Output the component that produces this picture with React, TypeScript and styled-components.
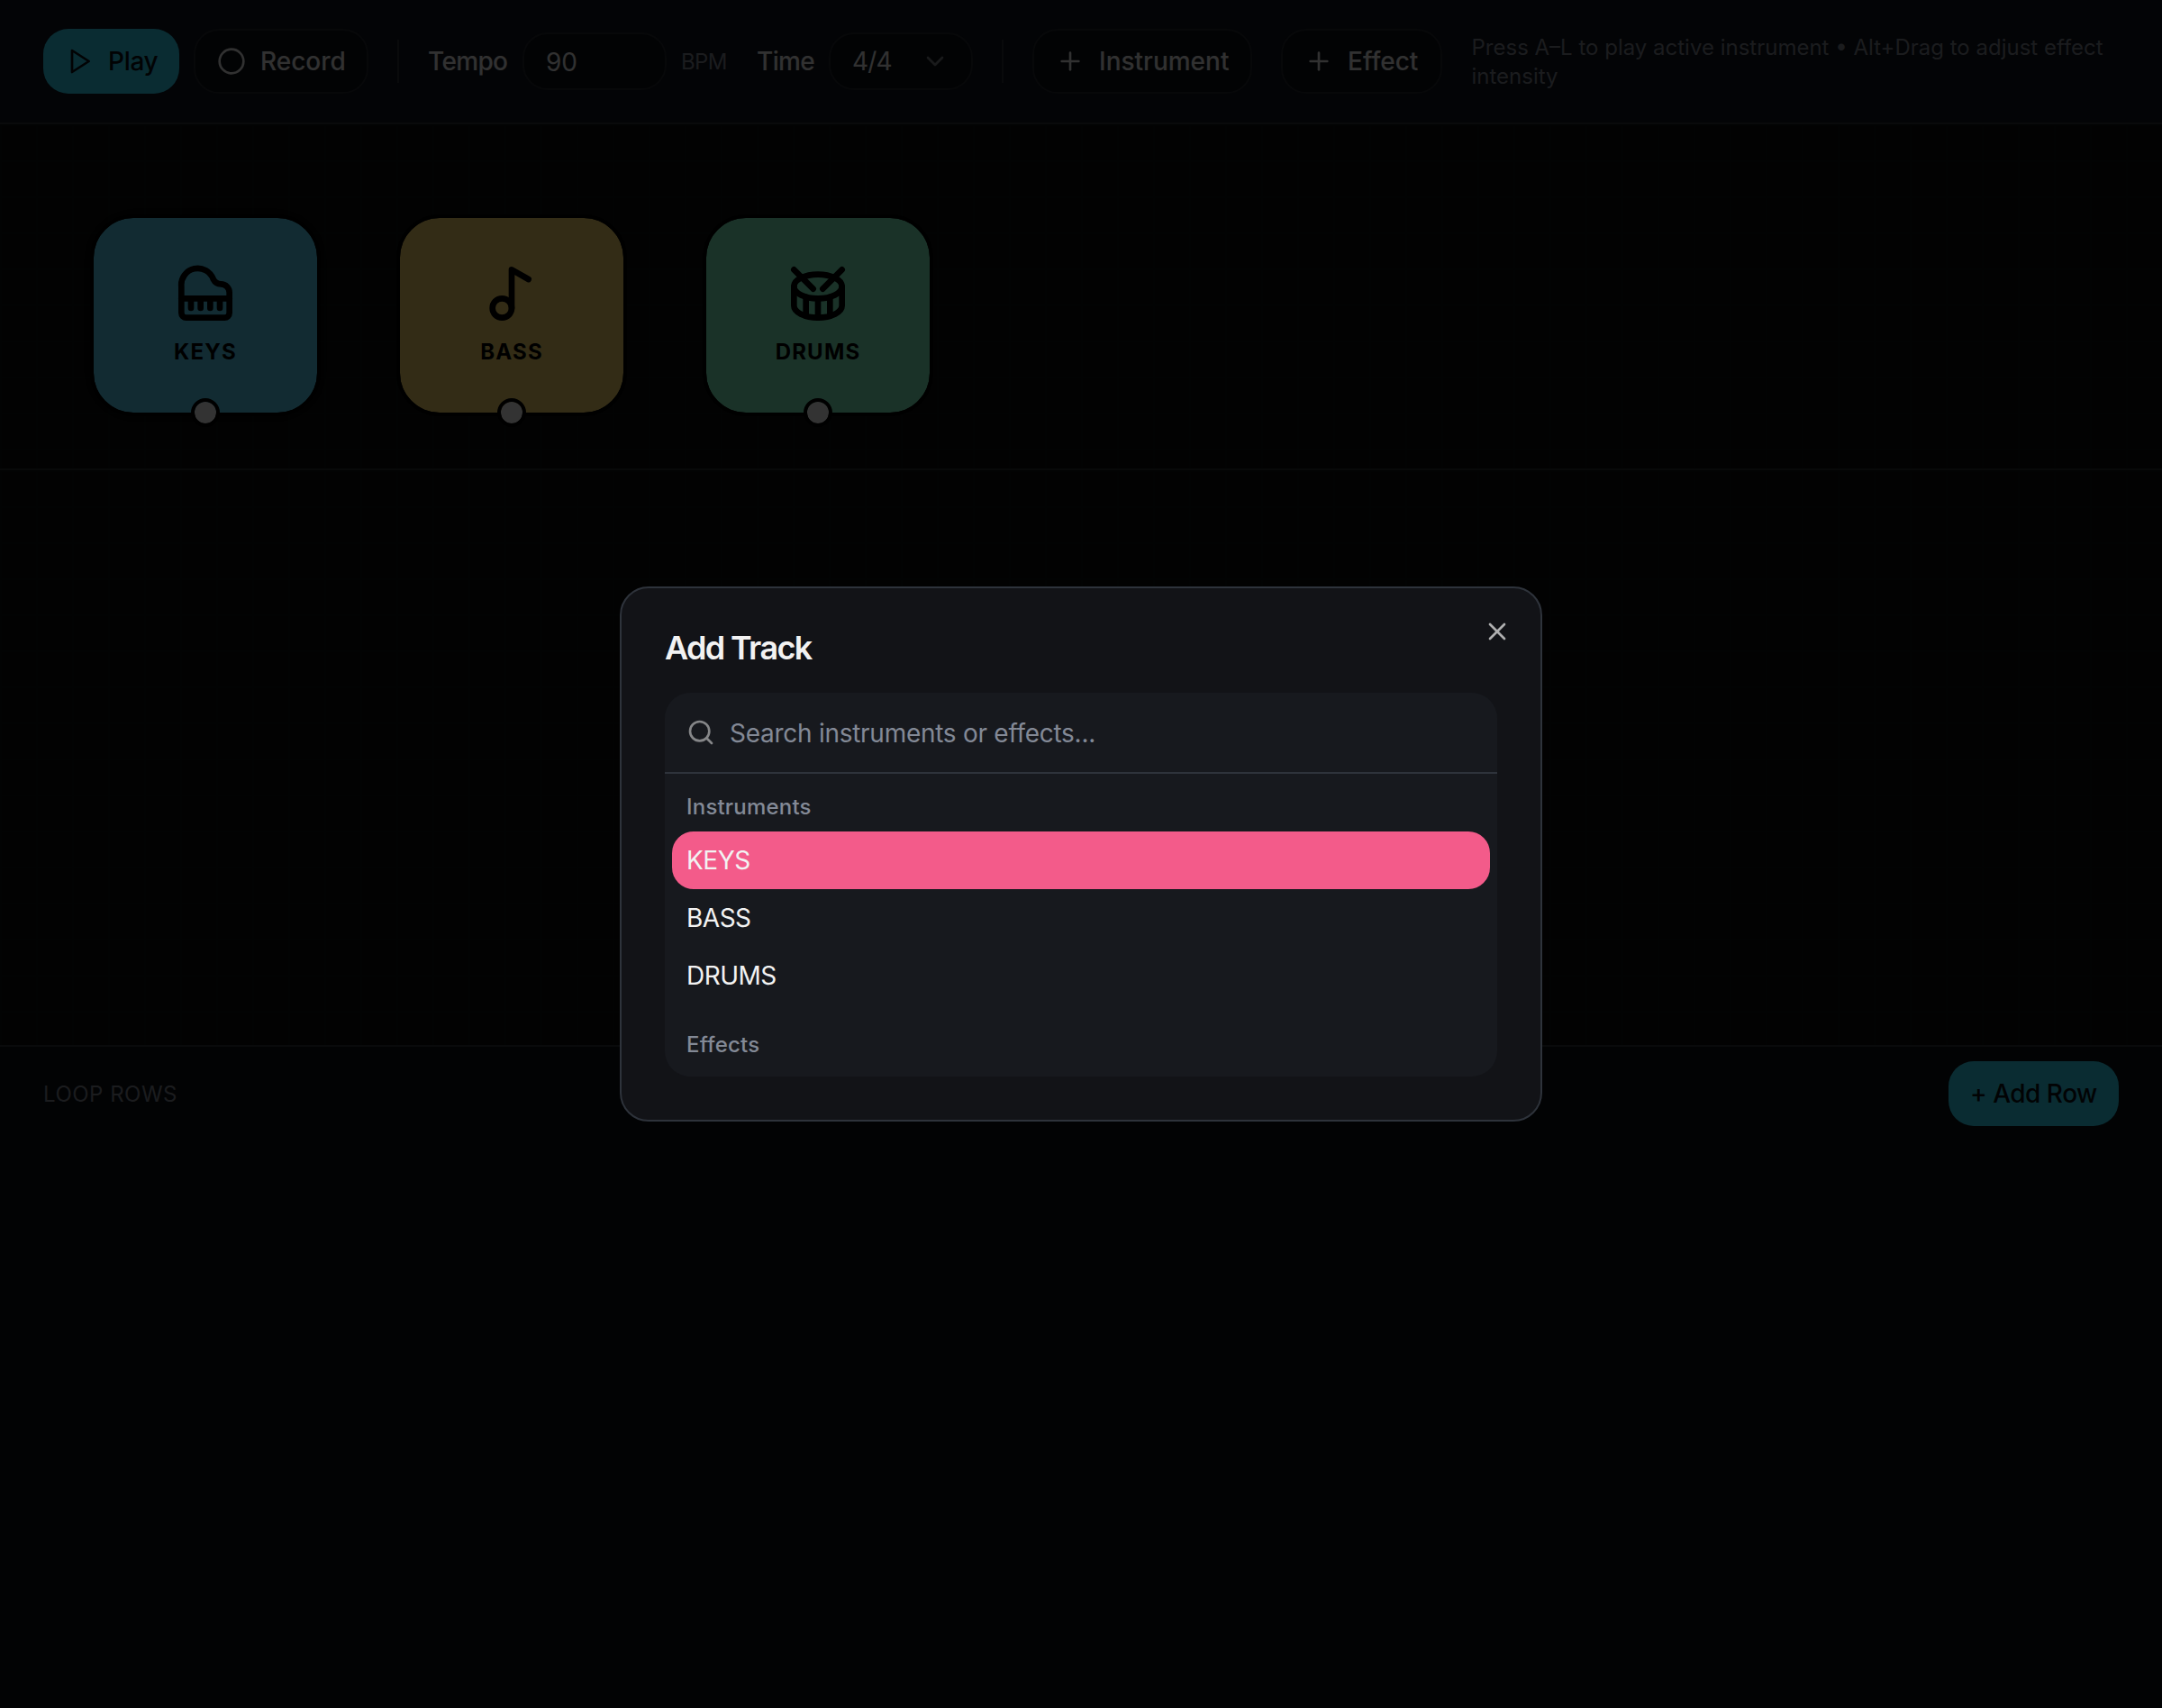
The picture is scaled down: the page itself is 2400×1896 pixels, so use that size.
import React from "react";
import styled, { createGlobalStyle } from "styled-components";
import { ChevronDown, Circle, Drum, Music2, Piano, Plus, Search, X } from "lucide-react";

const GlobalStyle = createGlobalStyle`
  *, *::before, *::after { box-sizing: border-box; }
  html, body, #root { height: 100%; }
  body {
    margin: 0;
    background: #0a0a0a;
    font-family: Inter, "Liberation Sans", sans-serif;
    font-size: 28px;
    line-height: 40px;
    color: #f2f2f2;
    overflow: hidden;
  }
  button, input { font: inherit; color: inherit; letter-spacing: inherit; }
`;

const LINE = "#2e333b";
const SOFT_LINE = "#24282e";
const ACCENT = "#32dcfa";

const Screen = styled.div`
  width: 2400px;
  height: 1896px;
  display: flex;
  flex-direction: column;
`;

const Toolbar = styled.header`
  display: flex;
  align-items: center;
  gap: 32px;
  height: 138px;
  padding: 0 48px;
  border-bottom: 2px solid ${LINE};
  background: #0f141e;
`;

const Group = styled.div`
  display: flex;
  align-items: center;
  gap: 16px;
  flex: none;
`;

const Button = styled.button<{ $width: number; $primary?: boolean; $tracking?: number }>`
  display: inline-flex;
  align-items: center;
  justify-content: flex-start;
  gap: 16px;
  flex: none;
  width: ${(p) => p.$width}px;
  height: 72px;
  padding: 0 24px;
  border: ${(p) => (p.$primary ? "0" : `2px solid ${SOFT_LINE}`)};
  border-radius: 28px;
  background: ${(p) => (p.$primary ? ACCENT : "#0a0f17")};
  color: ${(p) => (p.$primary ? "#0a0f17" : "#f2f2f2")};
  font-weight: 500;
  letter-spacing: ${(p) => p.$tracking ?? 0}px;
  white-space: nowrap;
  svg { flex: none; }
`;

const Divider = styled.span`
  width: 2px;
  height: 48px;
  flex: none;
  background: ${LINE};
`;

const Label = styled.span<{ $width: number }>`
  width: ${(p) => p.$width}px;
  font-weight: 500;
  letter-spacing: -0.65px;
  white-space: nowrap;
`;

const Field = styled.div`
  display: flex;
  align-items: center;
  justify-content: space-between;
  width: 160px;
  height: 64px;
  padding: 0 24px;
  border: 2px solid ${SOFT_LINE};
  border-radius: 28px;
  background: #0a0f17;
  letter-spacing: -0.8px;
`;

const NumberInput = styled.input`
  width: 100%;
  padding: 2px 0 0;
  border: 0;
  outline: 0;
  background: transparent;
  letter-spacing: 0;
`;

const Unit = styled.span`
  width: 52px;
  padding-top: 2px;
  font-size: 24px;
  line-height: 32px;
  letter-spacing: -0.7px;
  color: #858b98;
`;

const Hint = styled.p`
  margin: 0;
  padding: 2px 0 0 1px;
  flex: 1;
  font-size: 24px;
  line-height: 32px;
  color: #858b98;
`;

const Canvas = styled.section<{ $height: number; $ruled?: boolean }>`
  height: ${(p) => p.$height}px;
  padding: 100px;
  display: flex;
  align-items: flex-start;
  gap: 84px;
  background-color: #0c0c0c;
  background-image: linear-gradient(to right, #0c1211 2px, transparent 2px),
    linear-gradient(to bottom, #0c1211 2px, transparent 2px);
  background-size: 40px 40px;
  border-bottom: ${(p) => (p.$ruled ? "2px solid #2a2f31" : "0")};
`;

const Node = styled.div<{ $color: string; $active?: boolean }>`
  position: relative;
  display: flex;
  flex-direction: column;
  align-items: center;
  justify-content: center;
  gap: 16px;
  width: 256px;
  height: 224px;
  border: 4px solid #000;
  border-radius: 48px;
  background: ${(p) => p.$color};
  background-clip: padding-box;
  color: #000;
  box-shadow: ${(p) => (p.$active ? "0 0 24px rgba(0, 0, 0, 0.6)" : "none")};
`;

const NodeName = styled.span`
  height: 32px;
  padding-top: 1px;
  font-size: 24px;
  line-height: 32px;
  font-weight: 700;
  letter-spacing: 1.2px;
`;

const Port = styled.span`
  position: absolute;
  left: 50%;
  bottom: -16px;
  width: 32px;
  height: 32px;
  margin-left: -16px;
  border: 4px solid #000;
  border-radius: 50%;
  background: #fff;
  background-clip: padding-box;
`;

const LoopPanel = styled.section`
  flex: 1;
  padding: 16px 48px;
  border-top: 2px solid ${LINE};
  background: #0a0f17;
`;

const LoopHeader = styled.div`
  display: flex;
  align-items: center;
  justify-content: space-between;
`;

const LoopTitle = styled.span`
  padding-top: 2px;
  font-size: 24px;
  line-height: 32px;
  letter-spacing: 0.5px;
  color: #858b98;
`;

const Overlay = styled.div`
  position: fixed;
  inset: 0;
  display: flex;
  align-items: center;
  justify-content: center;
  background: rgba(0, 0, 0, 0.8);
`;

const Dialog = styled.div`
  position: relative;
  display: flex;
  flex-direction: column;
  gap: 32px;
  width: 1024px;
  padding: 48px;
  border: 2px solid ${LINE};
  border-radius: 32px;
  background: #121317;
`;

const DialogTitle = styled.h2`
  margin: 0;
  font-size: 36px;
  line-height: 36px;
  font-weight: 600;
  letter-spacing: -1.65px;
`;

const CloseButton = styled.button`
  position: absolute;
  top: 32px;
  right: 32px;
  display: flex;
  padding: 0;
  border: 0;
  background: transparent;
  opacity: 0.7;
`;

const Command = styled.div`
  border-radius: 28px;
  overflow: hidden;
  background: #17191e;
`;

const SearchRow = styled.div`
  display: flex;
  align-items: center;
  gap: 16px;
  height: 90px;
  padding: 0 24px;
  border-bottom: 2px solid ${LINE};
  svg { opacity: 0.5; flex: none; }
`;

const SearchInput = styled.input`
  flex: 1;
  padding: 2px 0 0;
  border: 0;
  outline: 0;
  background: transparent;
  letter-spacing: -0.27px;
  &::placeholder { color: #838996; opacity: 1; }
`;

const Section = styled.div`
  padding: 8px;
`;

const SectionTitle = styled.div`
  padding: 13px 16px 11px;
  font-size: 24px;
  line-height: 32px;
  font-weight: 500;
  letter-spacing: 0.2px;
  color: #838996;
`;

const Option = styled.div<{ $selected?: boolean }>`
  padding: 12px 16px;
  border-radius: 24px;
  letter-spacing: -0.5px;
  background: ${(p) => (p.$selected ? "#f35b8a" : "transparent")};
`;

const PlayIcon = () => (
  <svg width="32" height="32" viewBox="0 0 24 24" fill="none" stroke="currentColor" strokeWidth="2" strokeLinecap="round" strokeLinejoin="round">
    <polygon points="6 3 20 12 6 21 6 3" />
  </svg>
);

const nodes = [
  { name: "KEYS", color: "#5ad7fa", Icon: Piano, active: true },
  { name: "BASS", color: "#ffdc6e", Icon: Music2, active: false },
  { name: "DRUMS", color: "#84fac8", Icon: Drum, active: false },
];

export default function App() {
  return (
    <>
      <GlobalStyle />
      <Screen>
        <Toolbar>
          <Group>
            <Button $primary $width={151} $tracking={-0.3}><PlayIcon />Play</Button>
            <Button $width={194}><Circle size={32} />Record</Button>
          </Group>
          <Divider />
          <Group>
            <Label $width={89}>Tempo</Label>
            <Field><NumberInput defaultValue="90" /></Field>
            <Unit>BPM</Unit>
          </Group>
          <Group>
            <Label $width={64}>Time</Label>
            <Field>
              <span>4/4</span>
              <ChevronDown size={32} opacity={0.5} />
            </Field>
          </Group>
          <Divider />
          <Button $width={244}><Plus size={32} />Instrument</Button>
          <Button $width={178.5}><Plus size={32} />Effect</Button>
          <Hint>Press A–L to play active instrument • Alt+Drag to adjust effect intensity</Hint>
        </Toolbar>
        <Canvas $height={384} $ruled>
          {nodes.map(({ name, color, Icon, active }) => (
            <Node key={name} $color={color} $active={active}>
              <Icon size={64} strokeWidth={2.5} />
              <NodeName>{name}</NodeName>
              <Port />
            </Node>
          ))}
        </Canvas>
        <Canvas $height={638} />
        <LoopPanel>
          <LoopHeader>
            <LoopTitle>LOOP ROWS</LoopTitle>
            <Button $primary $width={189} $tracking={-0.5}>+ Add Row</Button>
          </LoopHeader>
        </LoopPanel>
      </Screen>
      <Overlay>
        <Dialog>
          <DialogTitle>Add Track</DialogTitle>
          <Command>
            <SearchRow>
              <Search size={32} />
              <SearchInput placeholder="Search instruments or effects..." />
            </SearchRow>
            <Section>
              <SectionTitle>Instruments</SectionTitle>
              {nodes.map(({ name }, i) => (
                <Option key={name} $selected={i === 0}>{name}</Option>
              ))}
            </Section>
            <Section>
              <SectionTitle>Effects</SectionTitle>
            </Section>
          </Command>
          <CloseButton><X size={32} /></CloseButton>
        </Dialog>
      </Overlay>
    </>
  );
}
